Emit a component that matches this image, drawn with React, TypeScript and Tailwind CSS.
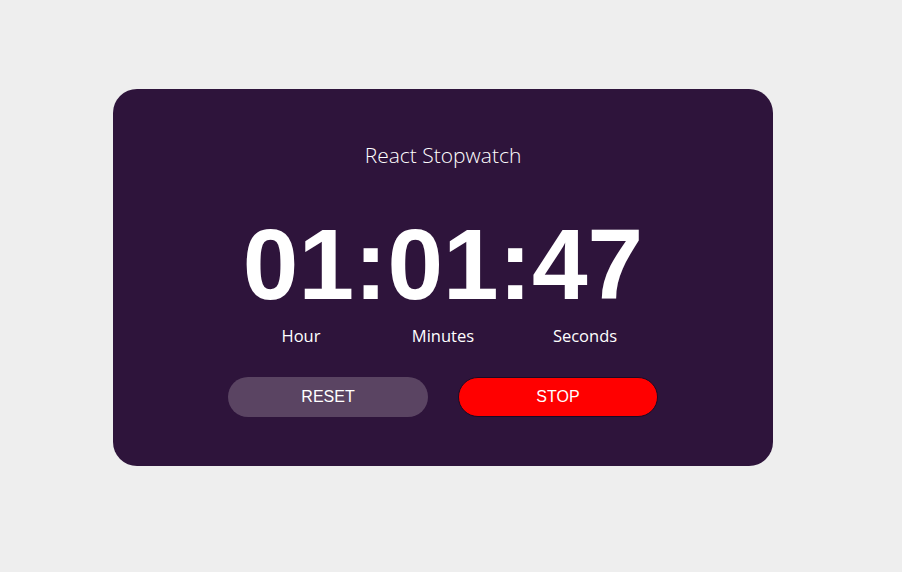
export default function App() {
  return (
    <div className="min-h-[572px] w-full bg-[#eeeeee] pt-[89px]">
      <div className="ml-[113px] flex h-[377px] w-[660px] flex-col items-center rounded-[24px] bg-[#2e143b] pt-[52px] text-white">
        <h1 className="font-['Open_Sans',sans-serif] text-[21px] leading-[28px] font-light">
          React Stopwatch
        </h1>

        <div className="mt-[45px] font-['Liberation_Sans',Arial,sans-serif] text-[100px] leading-[100px] font-bold">
          01:01:47
        </div>

        <div className="mt-[10px] flex font-['Open_Sans',sans-serif] text-[16.5px] leading-[24px]">
          <span className="w-[142px] text-center">Hour</span>
          <span className="w-[142px] text-center">Minutes</span>
          <span className="w-[142px] text-center">Seconds</span>
        </div>

        <div className="mt-[29px] flex gap-[30px] font-['Liberation_Sans',Arial,sans-serif] text-[16px]">
          <button className="h-[40px] w-[200px] rounded-[20px] bg-[#5a4462] text-white">
            RESET
          </button>
          <button className="h-[40px] w-[200px] rounded-[20px] border border-[#1a0a24] bg-[#ff0000] text-white">
            STOP
          </button>
        </div>
      </div>
    </div>
  );
}
